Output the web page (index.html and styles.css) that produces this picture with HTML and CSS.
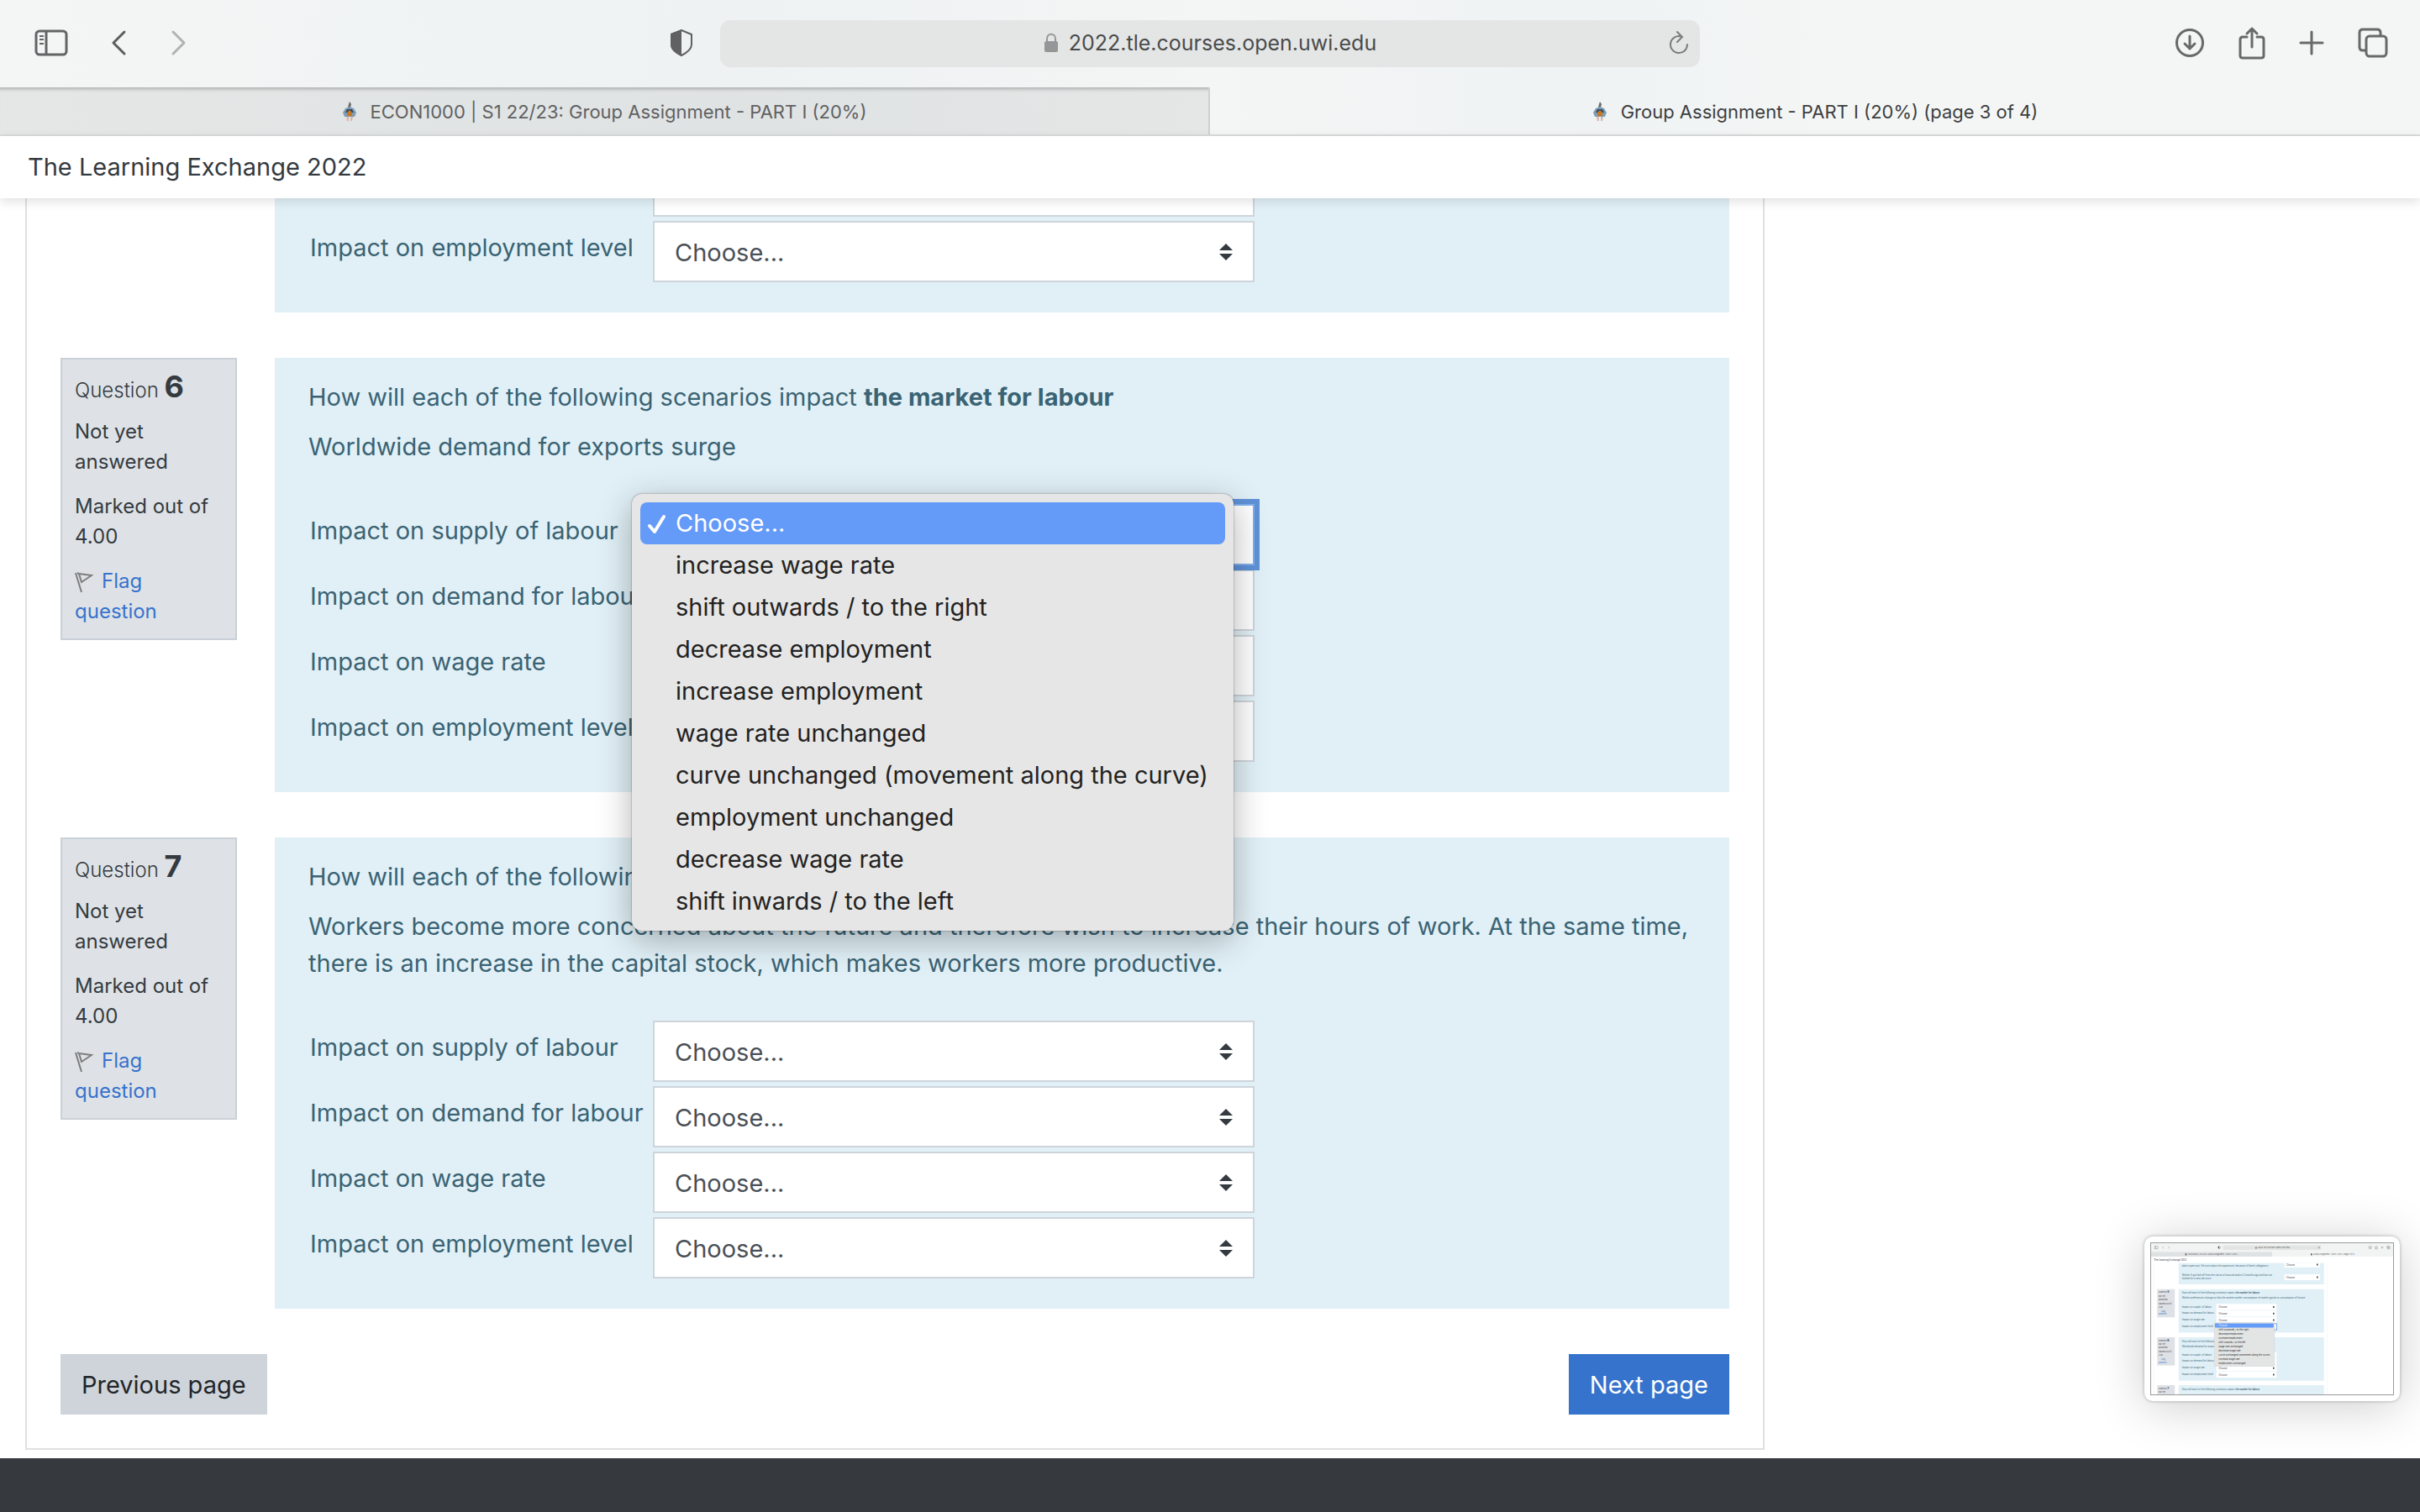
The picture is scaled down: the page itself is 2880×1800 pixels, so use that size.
FILE: index.html
```html
<!DOCTYPE html>
<html lang="en">
<head>
    <meta charset="UTF-8">
    <meta name="viewport" content="width=device-width, initial-scale=1.0">
    <title>Group Assignment - PART I (20%) (page 3 of 4)</title>
    <link rel="stylesheet" href="styles.css">
</head>
<body>
    <!-- shared icons -->
    <svg class="defs" width="0" height="0">
        <symbol id="crest" viewBox="0 0 18 24">
            <path d="M9 0l2 3-1 4H7l1-4z" fill="#6b6a66"/>
            <path d="M4 8l5-2 5 2 3 5-2 5H3l-2-5z" fill="#7f9db5"/>
            <path d="M6 9h6l2 4H4z" fill="#2f4a66"/>
            <path d="M6 13l3-3 3 3v4H6z" fill="#c9781f"/>
            <path d="M5 18h3v5H6zM10 18h3l-1 5h-2z" fill="#d9b9ae"/>
        </symbol>
        <symbol id="flag" viewBox="0 0 22 26">
            <path d="M1 2l7 23M5 3l15 2-12 8zM3 2l2 1" fill="none" stroke="#7d7d7d" stroke-width="2"/>
        </symbol>
    </svg>

    <header class="browser">
        <div class="toolbar">
            <div class="tools tools-left">
                <button type="button" aria-label="Sidebar">
                    <svg width="40" height="32" viewBox="0 0 40 32" fill="none" stroke="#636466" stroke-width="3"><rect x="2" y="2" width="36" height="28" rx="4"/><path d="M14 2v28"/><path d="M6 8h5M6 12h5M6 17h5" stroke-width="2"/></svg>
                </button>
                <button type="button" class="back" aria-label="Back">
                    <svg width="20" height="32" viewBox="0 0 20 32" fill="none" stroke="#5c5d5f" stroke-width="3" stroke-linecap="round" stroke-linejoin="round"><path d="M17 3L4 16l13 13"/></svg>
                </button>
                <button type="button" class="forward" aria-label="Forward">
                    <svg width="20" height="32" viewBox="0 0 20 32" fill="none" stroke="#b0b2b3" stroke-width="3" stroke-linecap="round" stroke-linejoin="round"><path d="M3 3l13 13L3 29"/></svg>
                </button>
                <button type="button" class="shield" aria-label="Privacy report">
                    <svg width="28" height="34" viewBox="0 0 28 34"><path d="M14 2l12 5v12c0 6-6 10-12 13C8 29 2 25 2 19V7z" fill="none" stroke="#5f6163" stroke-width="2"/><path d="M14 1v32C8 30 1 26 1 19V6z" fill="#5f6163"/></svg>
                </button>
            </div>
            <div class="address">
                <div class="url">
                    <svg width="18" height="24" viewBox="0 0 18 24"><rect x="1" y="10" width="16" height="13" rx="2" fill="#959697"/><path d="M4 11V7c0-7 10-7 10 0v4" fill="none" stroke="#959697" stroke-width="2"/></svg>
                    <span>2022.tle.courses.open.uwi.edu</span>
                </div>
                <button type="button" class="reload" aria-label="Reload">
                    <svg width="24" height="28" viewBox="0 0 24 28" fill="none" stroke="#7b7c7d" stroke-width="2" stroke-linecap="round"><path d="M15 6.500A10 10 0 1 0 22 16M10 1l6 6-6 6"/></svg>
                </button>
            </div>
            <div class="tools tools-right">
                <button type="button" aria-label="Downloads">
                    <svg width="36" height="36" viewBox="0 0 36 36" fill="none" stroke="#68696a" stroke-width="3" stroke-linecap="round" stroke-linejoin="round"><circle cx="18" cy="18" r="15.500"/><path d="M18 10v15M12 19l6 6 6-6"/></svg>
                </button>
                <button type="button" aria-label="Share">
                    <svg width="32" height="40" viewBox="0 0 32 40" fill="none" stroke="#68696a" stroke-width="3" stroke-linecap="round" stroke-linejoin="round"><path d="M10 13H5q-3 0-3 3v19q0 3 3 3h22q3 0 3-3V16q0-3-3-3h-5M16 25V3M10 9l6-6 6 6"/></svg>
                </button>
                <button type="button" aria-label="New tab">
                    <svg width="30" height="30" viewBox="0 0 30 30" stroke="#68696a" stroke-width="3" stroke-linecap="round"><path d="M15 2v26M2 15h26"/></svg>
                </button>
                <button type="button" aria-label="Show all tabs">
                    <svg width="36" height="36" viewBox="0 0 36 36" fill="none" stroke="#68696a" stroke-width="3"><rect x="10" y="10" width="24" height="24" rx="4"/><path d="M10 27H6q-4 0-4-4V6q0-4 4-4h17q4 0 4 4v4"/></svg>
                </button>
            </div>
        </div>
        <nav class="tabs">
            <a href="#" class="tab"><svg width="18" height="24"><use href="#crest"/></svg>ECON1000 | S1 22/23: Group Assignment - PART I (20%)</a>
            <a href="#" class="tab active"><svg width="18" height="24"><use href="#crest"/></svg>Group Assignment - PART I (20%) (page 3 of 4)</a>
        </nav>
    </header>

    <div class="navbar"><a href="#">The Learning Exchange 2022</a></div>

    <main>
        <form class="card">
            <!-- question 5, scrolled under the navbar -->
            <section class="question scrolled">
                <div class="info-space"></div>
                <div class="content">
                    <div class="answers">
                        <span></span>
                        <select id="q5wage" aria-label="Impact on wage rate"></select>
                        <label for="q5emp">Impact on employment level</label>
                        <select id="q5emp"><option>Choose...</option></select>
                    </div>
                </div>
            </section>

            <section class="question">
                <div class="info">
                    <h3>Question <span>6</span></h3>
                    <p>Not yet answered</p>
                    <p>Marked out of 4.00</p>
                    <a href="#"><svg width="22" height="26"><use href="#flag"/></svg>Flag question</a>
                </div>
                <div class="content">
                    <p>How will each of the following scenarios impact <b>the market for labour</b></p>
                    <p>Worldwide demand for exports surge</p>
                    <div class="answers">
                        <label for="q6supply">Impact on supply of labour</label>
                        <div class="open">
                            <select id="q6supply" class="focused"><option>Choose...</option></select>
                            <ul class="menu" role="listbox">
                                <li class="selected" role="option"><svg width="24" height="26" viewBox="0 0 24 26" fill="none" stroke="#fff" stroke-width="4" stroke-linecap="round" stroke-linejoin="round"><path d="M3 15l6 7L20 4"/></svg>Choose...</li>
                                <li role="option">increase wage rate</li>
                                <li role="option">shift outwards / to the right</li>
                                <li role="option">decrease employment</li>
                                <li role="option">increase employment</li>
                                <li role="option">wage rate unchanged</li>
                                <li role="option">curve unchanged (movement along the curve)</li>
                                <li role="option">employment unchanged</li>
                                <li role="option">decrease wage rate</li>
                                <li role="option">shift inwards / to the left</li>
                            </ul>
                        </div>
                        <label for="q6demand">Impact on demand for labour</label>
                        <select id="q6demand"><option>Choose...</option></select>
                        <label for="q6wage">Impact on wage rate</label>
                        <select id="q6wage"><option>Choose...</option></select>
                        <label for="q6emp">Impact on employment level</label>
                        <select id="q6emp"><option>Choose...</option></select>
                    </div>
                </div>
            </section>

            <section class="question">
                <div class="info">
                    <h3>Question <span>7</span></h3>
                    <p>Not yet answered</p>
                    <p>Marked out of 4.00</p>
                    <a href="#"><svg width="22" height="26"><use href="#flag"/></svg>Flag question</a>
                </div>
                <div class="content">
                    <p>How will each of the following scenarios impact <b>the market for labour</b></p>
                    <p>Workers become more concerned about the future and therefore wish to increase their hours of work. At the same time, there is an increase in the capital stock, which makes workers more productive.</p>
                    <div class="answers">
                        <label for="q7supply">Impact on supply of labour</label>
                        <select id="q7supply"><option>Choose...</option></select>
                        <label for="q7demand">Impact on demand for labour</label>
                        <select id="q7demand"><option>Choose...</option></select>
                        <label for="q7wage">Impact on wage rate</label>
                        <select id="q7wage"><option>Choose...</option></select>
                        <label for="q7emp">Impact on employment level</label>
                        <select id="q7emp"><option>Choose...</option></select>
                    </div>
                </div>
            </section>

            <div class="pager">
                <button type="button" class="btn btn-secondary">Previous page</button>
                <button type="button" class="btn btn-primary">Next page</button>
            </div>
        </form>
    </main>

    <footer></footer>

    <!-- floating capture preview -->
    <div class="preview">
        <svg viewBox="0 0 2880 1800" font-size="28">
            <rect width="2880" height="1800" fill="#fff"/>
            <rect width="2880" height="160" fill="#f2f4f4"/>
            <rect y="104" width="1440" height="56" fill="#dfe2e3"/>
            <rect x="857" y="24" width="1166" height="56" rx="12" fill="#e3e5e5"/>
            <g fill="none" stroke="#707172" stroke-width="4">
                <rect x="42" y="36" width="38" height="30" rx="4"/><path d="M55 36v30M148 38l-13 13 13 13M205 38l13 13-13 13M2737 51h27M2750 37v27"/>
                <circle cx="2607" cy="51" r="16"/><path d="M2607 42v18M2673 44h-6v24h26V44h-6M2680 32v24"/>
                <rect x="2808" y="34" width="24" height="24" rx="4"/><rect x="2816" y="43" width="26" height="25" rx="4"/>
                <circle cx="811" cy="51" r="14"/><circle cx="1998" cy="51" r="9"/>
            </g>
            <path d="M811 36v30q-14-4-14-15t14-15z" fill="#555"/>
            <g fill="#555">
                <text x="1270" y="61" font-size="26">2022.tle.courses.open.uwi.edu</text>
                <text x="442" y="141" font-size="22">ECON1000 | S1 22/23: Group Assignment - PART I (20%)</text>
                <text x="1930" y="141" font-size="22">Group Assignment - PART I (20%) (page 3 of 4)</text>
                <rect x="407" y="122" width="16" height="22"/><rect x="1900" y="122" width="16" height="22"/>
                <rect x="1242" y="46" width="14" height="18"/>
                <text x="33" y="209" fill="#333">The Learning Exchange 2022</text>
            </g>
            <path d="M31 236v1564M2099 236v1564" stroke="#e2e3e4" stroke-width="3"/>
            <g fill="#e1f0f7">
                <rect x="327" y="236" width="1731" height="254"/><rect x="327" y="547" width="1731" height="517"/>
                <rect x="327" y="1120" width="1731" height="517"/><rect x="327" y="1690" width="1731" height="110"/>
            </g>
            <g fill="#dee1e6">
                <rect x="72" y="547" width="210" height="336"/><rect x="72" y="1120" width="210" height="336"/><rect x="72" y="1690" width="210" height="110"/>
            </g>
            <g fill="#fff">
                <rect x="1587" y="236" width="420" height="52"/><rect x="1587" y="370" width="420" height="70"/>
                <rect x="777" y="723" width="716" height="73"/><rect x="777" y="801" width="716" height="73"/><rect x="777" y="879" width="716" height="73"/>
                <rect x="777" y="957" width="716" height="73" stroke="#5c8fd6" stroke-width="8"/>
                <rect x="777" y="1294" width="716" height="73"/><rect x="777" y="1372" width="716" height="73"/><rect x="777" y="1450" width="716" height="73"/><rect x="777" y="1528" width="716" height="73"/>
            </g>
            <g fill="#3c6473">
                <text x="367" y="282">plant supervisor. He turns down the opportunity because of family obligations.</text>
                <text x="367" y="390">Worker 5 got laid off from her job as a financial analyst 3 months ago and has not</text>
                <text x="367" y="433">looked for a new job since.</text>
                <text x="367" y="604">How will each of the following scenarios impact <tspan font-weight="bold">the market for labour</tspan></text>
                <text x="367" y="664">Worker preferences change so that the workers prefer consumption of market goods to consumption of leisure.</text>
                <text x="367" y="765">Impact on supply of labour</text><text x="367" y="843">Impact on demand for labour</text>
                <text x="367" y="921">Impact on wage rate</text><text x="367" y="999">Impact on employment level</text>
                <text x="367" y="1175">How will each of the following</text><text x="367" y="1235">Worldwide demand for exports</text>
                <text x="367" y="1336">Impact on supply of labour</text><text x="367" y="1414">Impact on demand for labour</text>
                <text x="367" y="1492">Impact on wage rate</text><text x="367" y="1570">Impact on employment level</text>
                <text x="367" y="1745">How will each of the following scenarios impact <tspan font-weight="bold">the market for labour</tspan></text>
            </g>
            <g fill="#444">
                <text x="1607" y="267">Choose...</text><text x="1607" y="417">Choose...</text>
                <text x="803" y="770">Choose...</text><text x="803" y="848">Choose...</text><text x="803" y="926">Choose...</text>
                <text x="803" y="1497">Choose...</text><text x="803" y="1575">Choose...</text>
                <path d="M1970 246h16v20h-16zM1970 396h16v20h-16zM1450 750h16v20h-16zM1450 828h16v20h-16zM1450 906h16v20h-16zM1450 1477h16v20h-16zM1450 1555h16v20h-16z"/>
            </g>
            <g fill="#444" font-size="23">
                <text x="89" y="592">Question <tspan font-size="34" font-weight="bold">5</tspan></text><text x="89" y="641">Not yet</text><text x="89" y="677">answered</text><text x="89" y="729">Marked out of</text><text x="89" y="765">4.00</text>
                <text x="89" y="1165">Question <tspan font-size="34" font-weight="bold">6</tspan></text><text x="89" y="1214">Not yet</text><text x="89" y="1250">answered</text><text x="89" y="1302">Marked out of</text><text x="89" y="1338">4.00</text>
                <text x="89" y="1735">Question <tspan font-size="34" font-weight="bold">7</tspan></text><text x="89" y="1784">Not yet</text>
                <g fill="#3673cc"><text x="120" y="818">Flag</text><text x="89" y="854">question</text><text x="120" y="1391">Flag</text><text x="89" y="1427">question</text></g>
            </g>
            <rect x="752" y="945" width="716" height="520" rx="12" fill="#e3e5e5" stroke="#c4c8ca" stroke-width="4"/>
            <rect x="760" y="955" width="698" height="50" rx="8" fill="#649af8"/>
            <text x="772" y="990" fill="#fff">✓ Choose...</text>
            <g fill="#222">
                <text x="803" y="1040">shift outwards / to the right</text><text x="803" y="1090">decrease employment</text><text x="803" y="1140">increase employment</text>
                <text x="803" y="1190">shift inwards / to the left</text><text x="803" y="1240">wage rate unchanged</text><text x="803" y="1290">decrease wage rate</text>
                <text x="803" y="1340">curve unchanged (movement along the curve)</text><text x="803" y="1390">increase wage rate</text><text x="803" y="1440">employment unchanged</text>
            </g>
        </svg>
    </div>
</body>
</html>
```
FILE: styles.css
```css
* {
    box-sizing: border-box;
}
body {
    display: flex;
    flex-direction: column;
    min-height: 100vh;
    margin: 0;
    font-family: Inter, "Liberation Sans", sans-serif;
    font-size: 29px;
    line-height: 44px;
    color: #343a40;
    background-color: #fff;
}
.defs {
    position: absolute;
}
button {
    display: flex;
    padding: 0;
    border: none;
    background: none;
    font: inherit;
    cursor: pointer;
}
a {
    color: #3673cc;
    text-decoration: none;
}
p {
    margin: 0 0 15px;
}

/* browser window */
.browser {
    background: linear-gradient(to right, #f4f6f5, #eef2f3 30%, #f4f5f5 50%, #eff3f4 66%, #f4f6f5 76%);
    border-bottom: 2px solid #dadcdc;
}
.toolbar {
    display: grid;
    grid-template-columns: 1fr minmax(0, 1166px) 1fr;
    align-items: center;
    height: 104px;
}
.tools {
    display: flex;
    align-items: center;
    padding-bottom: 2px;
}
.tools-left {
    padding-left: 41px;
    padding-right: 32px;
}
.back {
    margin-left: 50px;
}
.forward {
    margin-left: 52px;
}
.shield {
    margin-left: auto;
}
.tools-right {
    justify-content: flex-end;
    gap: 40px;
    padding-right: 38px;
}
.address {
    display: flex;
    align-items: center;
    height: 56px;
    padding: 0 13px 2px;
    border-radius: 12px;
    background-color: #e4e6e6;
    font-size: 25px;
    color: #4a4b4c;
}
.url {
    display: flex;
    flex: 1;
    justify-content: center;
    align-items: center;
    gap: 12px;
    padding-left: 24px;
}
.tabs {
    display: grid;
    grid-template-columns: 1fr 1fr;
}
.tab {
    display: flex;
    justify-content: center;
    align-items: center;
    gap: 16px;
    height: 56px;
    padding-top: 2px;
    font-size: 22px;
    color: #606162;
    background-color: rgba(0, 0, 0, 0.06);
    box-shadow: inset 0 6px 4px -4px rgba(0, 0, 0, 0.25);
    border-right: 2px solid #cfd1d1;
}
.tab.active {
    color: #3d3e3f;
    background: none;
    box-shadow: none;
    border-right: none;
}

/* site */
.navbar {
    position: relative;
    z-index: 1;
    display: flex;
    align-items: center;
    height: 74px;
    padding: 0 33px;
    background-color: #fff;
    box-shadow: 0 4px 12px rgba(0, 0, 0, 0.12);
}
.navbar a {
    color: #343a40;
}
main {
    padding: 0 780px 10px 30px;
}
.card {
    margin-top: -51px;
    padding: 0 40px 40px;
    border: 2px solid #dee0e2;
    border-top: none;
}
.question {
    display: grid;
    grid-template-columns: 210px 1fr;
    align-items: start;
    gap: 45px;
    margin-bottom: 54px;
}
.info {
    height: 336px;
    padding: 14px 15px;
    border: 2px solid #cad0d7;
    background-color: #dee2e6;
    font-size: 24px;
    line-height: 36px;
}
.info h3 {
    margin: 0 0 13px;
    font-size: 24px;
    font-weight: 300;
}
.info h3 span {
    font-size: 36px;
    font-weight: 700;
}
.info p {
    margin-bottom: 17px;
}
.info svg {
    margin-right: 10px;
    vertical-align: -6px;
}
.content {
    padding: 25px 40px 36px;
    background-color: #e1f0f7;
    color: #3a6373;
}
.scrolled .content {
    padding-top: 0;
}
.scrolled .answers {
    margin-top: 0;
}
.answers {
    display: grid;
    grid-template-columns: 408px 716px;
    row-gap: 5px;
    margin: 46px 2px 0;
}
.answers label {
    padding-top: 10px;
}
select {
    appearance: none;
    width: 100%;
    height: 73px;
    padding: 2px 24px 0;
    border: 2px solid #ced4da;
    border-radius: 0;
    font: inherit;
    color: #495057;
    background: #fff url("data:image/svg+xml,%3csvg xmlns='http://www.w3.org/2000/svg' viewBox='0 0 16 20'%3e%3cpath fill='%23343a40' d='M0 8L8 0l8 8zM0 12l8 8 8-8z'/%3e%3c/svg%3e") no-repeat right 24px center / 16px 20px;
}
.focused {
    border-color: #80b0ec;
    box-shadow: 0 0 0 6px #5f92d8;
}
.open {
    position: relative;
}
.menu {
    position: absolute;
    z-index: 2;
    top: -12px;
    left: -25px;
    width: 716px;
    margin: 0;
    padding: 10px;
    border-radius: 12px;
    background-color: #e6e6e6;
    box-shadow: 0 0 2px rgba(0, 0, 0, 0.5), 0 10px 40px rgba(0, 0, 0, 0.3);
    list-style: none;
    color: #222;
    line-height: 50px;
}
.menu li {
    padding-left: 42px;
    border-radius: 8px;
}
.menu .selected {
    padding-left: 8px;
    color: #fff;
    background-color: #649af8;
}
.menu svg {
    margin-right: 10px;
    vertical-align: -4px;
}
.pager {
    display: flex;
    justify-content: space-between;
}
.btn {
    align-items: center;
    height: 72px;
    padding: 2px 25px 0;
}
.btn-secondary {
    color: #212529;
    background-color: #ced4da;
}
.btn-primary {
    color: #fff;
    background-color: #3673cc;
}
footer {
    flex: 1;
    background-color: #363a3e;
}
.preview {
    position: fixed;
    right: 24px;
    bottom: 132px;
    width: 304px;
    padding: 8px;
    border-radius: 10px;
    background-color: #fff;
    box-shadow: 0 0 4px rgba(0, 0, 0, 0.3), 0 6px 60px rgba(0, 0, 0, 0.2);
}
.preview svg {
    display: block;
    width: 100%;
    outline: 1px solid #9a9b9c;
}
```
